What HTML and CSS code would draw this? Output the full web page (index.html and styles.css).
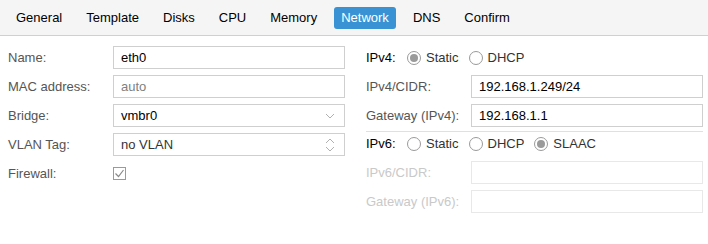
FILE: index.html
```html
<!DOCTYPE html>
<html lang="en">

<head>
    <meta charset="UTF-8">
    <title>Create CT: Network</title>
    <link rel="stylesheet" href="styles.css">
</head>

<body>
    <div class="tabs">
        <span class="tab">General</span>
        <span class="tab">Template</span>
        <span class="tab">Disks</span>
        <span class="tab">CPU</span>
        <span class="tab">Memory</span>
        <span class="tab active">Network</span>
        <span class="tab">DNS</span>
        <span class="tab">Confirm</span>
    </div>

    <div class="panel">
        <div class="col">
            <div class="row">
                <label class="label">Name:</label>
                <div class="field"><span class="value">eth0</span></div>
            </div>
            <div class="row">
                <label class="label">MAC address:</label>
                <div class="field"><span class="value empty">auto</span></div>
            </div>
            <div class="row">
                <label class="label">Bridge:</label>
                <div class="field">
                    <span class="value">vmbr0</span>
                    <svg class="trigger" width="10" height="6" viewBox="0 0 10 6">
                        <path d="M1 1 L5 5 L9 1" fill="none" stroke="#b0b0b0" stroke-width="1"/>
                    </svg>
                </div>
            </div>
            <div class="row">
                <label class="label">VLAN Tag:</label>
                <div class="field">
                    <span class="value dim">no VLAN</span>
                    <svg class="trigger" width="10" height="14" viewBox="0 0 10 14">
                        <path d="M1 5 L5 1 L9 5" fill="none" stroke="#b0b0b0" stroke-width="1"/>
                        <path d="M1 9 L5 13 L9 9" fill="none" stroke="#b0b0b0" stroke-width="1"/>
                    </svg>
                </div>
            </div>
            <div class="row">
                <label class="label">Firewall:</label>
                <span class="checkbox">
                    <svg width="11" height="11" viewBox="0 0 11 11">
                        <path d="M1.5 5.5 L4.5 8.5 L9.5 2" fill="none" stroke="#8a8a8a" stroke-width="1.2"/>
                    </svg>
                </span>
            </div>
        </div>

        <div class="col">
            <div class="group">
                <div class="row">
                    <label class="label short strong">IPv4:</label>
                    <span class="radio checked"></span><span class="opt">Static</span>
                    <span class="radio"></span><span class="opt">DHCP</span>
                </div>
                <div class="row">
                    <label class="label">IPv4/CIDR:</label>
                    <div class="field"><span class="value">192.168.1.249/24</span></div>
                </div>
                <div class="row">
                    <label class="label">Gateway (IPv4):</label>
                    <div class="field"><span class="value">192.168.1.1</span></div>
                </div>
            </div>
            <div class="group v6">
                <div class="row">
                    <label class="label short strong">IPv6:</label>
                    <span class="radio"></span><span class="opt">Static</span>
                    <span class="radio"></span><span class="opt">DHCP</span>
                    <span class="radio checked"></span><span class="opt">SLAAC</span>
                </div>
                <div class="row disabled">
                    <label class="label">IPv6/CIDR:</label>
                    <div class="field"></div>
                </div>
                <div class="row disabled">
                    <label class="label">Gateway (IPv6):</label>
                    <div class="field"></div>
                </div>
            </div>
        </div>
    </div>
</body>

</html>
```

FILE: styles.css
```css
body {
    margin: 0;
    background: #fff;
    font-family: 'Liberation Sans', Arial, sans-serif;
    font-size: 13px;
    color: #000;
}

.tabs {
    display: flex;
    align-items: center;
    gap: 8px;
    height: 35px;
    padding: 0 8px;
    background: #f5f5f5;
    border-bottom: 1px solid #d0d0d0;
}

.tab {
    padding: 0 8px;
    height: 22px;
    line-height: 22px;
    color: #000;
    border-radius: 3px;
}

.tab.active {
    padding: 0 7px;
    margin: 0 1px;
    background: #3892d4;
    color: #fff;
}

.panel {
    display: flex;
    gap: 21px;
    padding: 10px 5px 0 8px;
}

.col {
    display: flex;
    flex-direction: column;
    gap: 6px;
    width: 337px;
}

.group {
    display: flex;
    flex-direction: column;
    gap: 6px;
}

.group.v6 {
    margin-top: -2px;
    border-top: 1px solid #e0e0e0;
}

.row {
    display: flex;
    align-items: center;
    height: 23px;
}

.label {
    width: 105px;
    flex: none;
    color: #555;
}

.label.short {
    width: 41px;
}

.label.strong {
    color: #000;
}

.field {
    flex: 1;
    height: 21px;
    display: flex;
    align-items: center;
    justify-content: space-between;
    padding: 0 9px 0 7px;
    border: 1px solid #cfcfcf;
}

.value.empty {
    color: #808080;
}

.value.dim {
    color: #333;
}

.disabled .label {
    color: #c9c9c9;
}

.disabled .field {
    border-color: #e8e8e8;
}

.checkbox {
    width: 11px;
    height: 11px;
    border: 1px solid #9a9a9a;
    display: flex;
}

.radio {
    width: 12px;
    height: 12px;
    border: 1px solid #9a9a9a;
    border-radius: 50%;
    position: relative;
    flex: none;
}

.radio.checked::after {
    content: '';
    position: absolute;
    left: 2px;
    top: 2px;
    width: 8px;
    height: 8px;
    border-radius: 50%;
    background: #9a9a9a;
}

.opt {
    margin: 0 10px 0 5px;
    color: #333;
}
```
